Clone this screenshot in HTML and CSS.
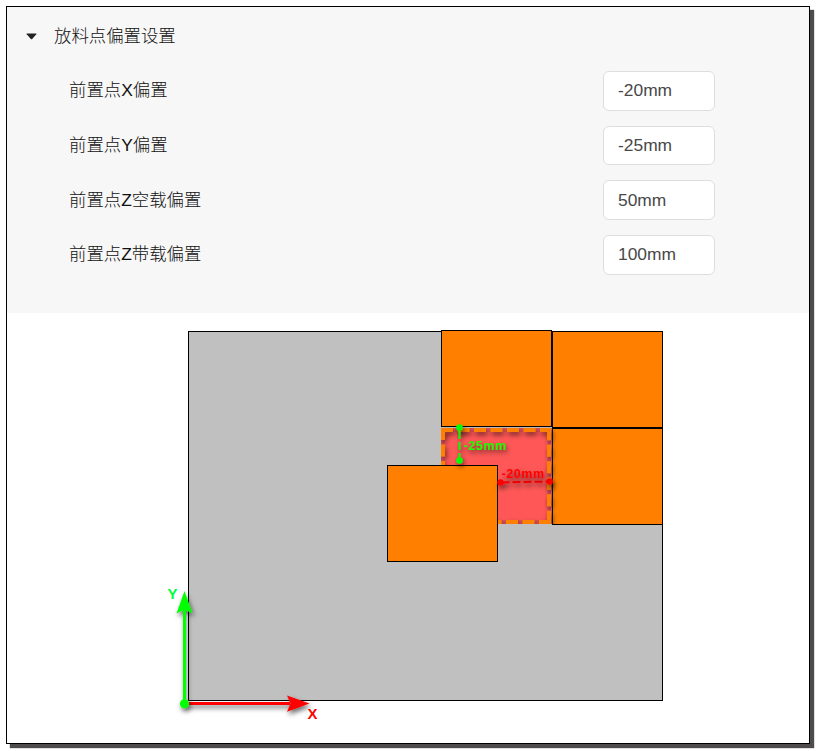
FILE: index.html
```html
<!DOCTYPE html>
<html lang="zh-CN">
<head>
<meta charset="utf-8">
<title>放料点偏置设置</title>
<link rel="stylesheet" href="styles.css">
</head>
<body>
<main class="frame">
  <section class="panel">
    <h1 class="title"><svg class="caret" width="11" height="7" viewBox="0 0 11 7"><path d="M1 .5h9Q10.800 .5 10.300 1.200L6.200 5.900Q5.500 6.600 4.800 5.900L.7 1.200Q.2.5 1 .5Z" fill="#222"/></svg><span>放料点偏置设置</span></h1>
    <div class="rows">
      <label class="row"><span>前置点X偏置</span><input class="field" value="-20mm"></label>
      <label class="row"><span>前置点Y偏置</span><input class="field" value="-25mm"></label>
      <label class="row"><span>前置点Z空载偏置</span><input class="field" value="50mm"></label>
      <label class="row"><span>前置点Z带载偏置</span><input class="field" value="100mm"></label>
    </div>
  </section>
  <svg class="diagram" width="802" height="430" viewBox="7 313 802 430">
    <defs>
      <filter id="shadow" filterUnits="userSpaceOnUse" x="150" y="400" width="450" height="340">
        <feDropShadow dx="1.500" dy="3" stdDeviation="2.400" flood-color="#000" flood-opacity=".6"/>
      </filter>
      <clipPath id="slot"><path d="M441 427H560V524H441Z"/></clipPath>
    </defs>
    <rect x="188.500" y="331.500" width="474" height="369" fill="#c0c0c0" stroke="#000"/>
    <rect x="442" y="428" width="109.500" height="96" fill="#ff5757"/>
    <g fill="#ff8000" stroke="#000">
      <rect x="552.500" y="331.500" width="110" height="96"/>
      <rect x="552.500" y="428.500" width="110" height="96"/>
      <rect x="441.500" y="330.500" width="110" height="96"/>
    </g>
    <path d="M551.500 331V427M552 427.500H663" stroke="#000"/>
    <path d="M443 430H549.500V522H443Z" fill="none" stroke="#dc5058" stroke-width="4"/>
    <g clip-path="url(#slot)">
      <g fill="none" stroke="#ff8000" stroke-width="4" stroke-dasharray="12 4.500" filter="url(#shadow)">
        <path d="M441 430H551"/>
        <path d="M443 428V468"/>
        <path d="M549 428V524" stroke-dashoffset="-.3"/>
        <path d="M551 522H441"/>
      </g>
    </g>
    <path d="M552.500 428V525" stroke="#000"/>
    <rect x="387.500" y="465.500" width="110" height="96" fill="#ff8000" stroke="#000"/>
    <g filter="url(#shadow)" stroke="#0f0" fill="#0f0">
      <path d="M459.500 428V460" stroke-width="2" stroke-dasharray="8 3" stroke-dashoffset="-3"/>
      <circle cx="459.500" cy="427.500" r="3.300" stroke="none"/>
      <circle cx="459.500" cy="460.500" r="3.300" stroke="none"/>
    </g>
    <g filter="url(#shadow)" stroke="red" fill="red">
      <path d="M500.500 482.500 550 481.500" stroke-width="2" stroke-dasharray="8 3" stroke-dashoffset="-1"/>
      <circle cx="500.500" cy="482.500" r="3.200" stroke="none"/>
      <circle cx="549.700" cy="481.500" r="3.200" stroke="none"/>
    </g>
    <g filter="url(#shadow)">
      <text class="measure" x="463.500" y="449.500" textLength="42.500" fill="#1aff00">-25mm</text>
      <text class="measure" x="501.500" y="477.500" textLength="42.500" fill="red">-20mm</text>
    </g>
    <g filter="url(#shadow)" fill="red">
      <path d="M185 702H290V705H185Z"/>
      <path d="M309.500 703.500 287 695.500 290.500 703.500 287 711.700Z"/>
    </g>
    <g filter="url(#shadow)" fill="#0f0">
      <path d="M183 608H186V703H183Z"/>
      <path d="M184.500 591 192.500 613.500 184.500 609.500 176.500 613.500Z"/>
      <circle cx="184.500" cy="703.700" r="4.600"/>
    </g>
    <text class="axis" x="167.500" y="599" fill="#00ff40">Y</text>
    <text class="axis" x="307.500" y="719" fill="red">X</text>
  </svg>
</main>
</body>
</html>
```

FILE: styles.css
```css
* { box-sizing: border-box; }

body {
  margin: 0;
  padding: 6px;
  background: #fff;
  overflow: hidden;
  font-family: "Liberation Sans", "Noto Sans CJK SC", sans-serif;
}

.frame {
  width: 804px;
  height: 738px;
  border: 1px solid #000;
  background: #fff;
  box-shadow: 4px 4px 1px #4d4b4b;
}

.panel {
  height: 306px;
  background: #f7f7f7;
}

.title {
  display: flex;
  align-items: center;
  gap: 17px;
  height: 58px;
  margin: 0;
  padding-left: 19px;
  font-size: 17.4px;
  font-weight: 300;
  color: #111;
}

.title span,
.row span { padding-bottom: 3px; }

.rows {
  display: grid;
  grid-auto-rows: 54.67px;
  padding: 0 94px 0 62px;
  margin-top: -1.5px;
}

.row {
  display: flex;
  align-items: center;
  justify-content: space-between;
  font-size: 17.4px;
  font-weight: 300;
  color: #111;
}

.row span { padding-bottom: 4px; }

.field {
  width: 112px;
  height: 39.5px;
  padding: 0 14px;
  border: 1px solid #dedede;
  border-radius: 6px;
  background: #fff;
  font: 17.4px "Liberation Sans", sans-serif;
  color: #484848;
}

.diagram { display: block; }

.measure { font: bold 12.5px "Liberation Sans", sans-serif; }

.axis { font: bold 15px "Liberation Sans", sans-serif; }
```
